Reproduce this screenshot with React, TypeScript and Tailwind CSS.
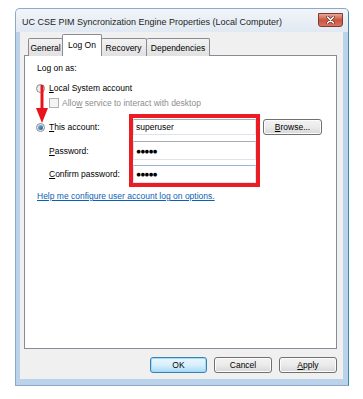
import React from 'react';

function Radio({ checked }: { checked?: boolean }) {
  return (
    <div className="w-[9px] h-[9px] shrink-0 rounded-full border border-[#8a8a8a] bg-gradient-to-br from-[#e6e6e6] to-[#fbfbfb] flex items-center justify-center">
      {checked && <div className="w-[5px] h-[5px] rounded-full bg-gradient-to-br from-[#7fc4ee] to-[#16508c]" />}
    </div>
  );
}

function Btn({ children, focused, className }: { children: React.ReactNode; focused?: boolean; className?: string }) {
  return (
    <div
      className={
        'h-[16px] rounded-[3px] border flex items-center justify-center text-[8.5px] ' +
        (focused
          ? 'border-[#3c7fb1] bg-gradient-to-b from-[#eaf6fd] via-[#d9f0fc] to-[#a7d9f5] shadow-[inset_0_0_0_1px_#9edcf7]'
          : 'border-[#707070] bg-gradient-to-b from-[#f2f2f2] via-[#ebebeb] to-[#d6d6d6] shadow-[inset_0_0_0_1px_#fcfcfc]') +
        ' ' +
        (className ?? '')
      }
    >
      {children}
    </div>
  );
}

function Field({ value, h, top }: { value: string; h: string; top?: string }) {
  return (
    <div className={`${h} border border-[#e2e3ea] ${top ?? 'border-t-[#abadb3]'} bg-white flex items-center pl-[2px] text-[8.5px]`}>
      {value}
    </div>
  );
}

export default function App() {
  return (
    <div className="w-[363px] h-[399px] bg-white pt-[8px] pl-[15px] font-['Liberation_Sans',Arial,sans-serif] text-[8.5px] text-black leading-[12px]">
      <div className="w-[334px] h-[378px] flex flex-col rounded-t-[5px] border border-[#8da9c7] border-r-[#3a86ad] bg-[#bad2ea]">
        {/* title bar */}
        <div className="h-[23px] shrink-0 flex items-center justify-between pl-[6px] pr-[5px] bg-gradient-to-b from-[#f2f5f9] to-[#e1e9f2] rounded-t-[4px]">
          <span className="text-[9px] text-[#1e1e1e] pt-[2px]">UC CSE PIM Syncronization Engine Properties (Local Computer)</span>
          <div className="w-[25px] h-[14px] -mt-[2px] rounded-b-[3px] border border-[#7d3a30] bg-gradient-to-b from-[#e8a89b] via-[#c9543e] to-[#d8735f] flex items-center justify-center">
            <svg width="9" height="8" viewBox="0 0 9 8">
              <path d="M1.5 1 L7.5 7 M7.5 1 L1.5 7" stroke="#5b2a22" strokeWidth="2.8" strokeLinecap="round" />
              <path d="M1.5 1 L7.5 7 M7.5 1 L1.5 7" stroke="#ffffff" strokeWidth="1.6" strokeLinecap="round" />
            </svg>
          </div>
        </div>
        {/* body */}
        <div className="flex-1 flex pl-[4px] pr-[5px] pb-[6px]">
          <div className="flex-1 flex flex-col bg-[#f0f0f0] pl-[4px] pr-[6px] pt-[2px]">
            {/* tabs */}
            <div className="h-[22px] flex items-end pl-[4px] -mb-[1px] relative z-10">
              <div className="h-[18px] w-[35px] border border-[#898c95] border-b-0 rounded-t-[2px] bg-gradient-to-b from-[#f2f2f2] to-[#e1e1e1] flex items-center justify-center text-[8.5px]">
                General
              </div>
              <div className="h-[22px] w-[40px] -mx-[1px] border border-[#898c95] border-b-0 rounded-t-[2px] bg-white flex items-start justify-center pt-[4px] text-[8.5px] relative">
                Log On
              </div>
              <div className="h-[18px] w-[46px] border border-[#898c95] border-b-0 border-l-0 rounded-t-[2px] bg-gradient-to-b from-[#f2f2f2] to-[#e1e1e1] flex items-center justify-center text-[8.5px]">
                Recovery
              </div>
              <div className="h-[18px] w-[63px] border border-[#898c95] border-b-0 border-l-0 rounded-t-[2px] bg-gradient-to-b from-[#f2f2f2] to-[#e1e1e1] flex items-center justify-center text-[8.5px]">
                Dependencies
              </div>
            </div>
            {/* panel */}
            <div className="h-[294px] border border-[#898c95] bg-white relative pl-[11px] pt-[6px]">
              <div className="pl-[1px]">Log on as:</div>
              <div className="mt-[8px] h-[12px] flex items-center gap-[4px]">
                <Radio />
                <span>
                  <span className="underline">L</span>ocal System account
                </span>
              </div>
              <div className="mt-[3px] h-[12px] flex items-center gap-[3px] pl-[13px] text-[#8d8d8d]">
                <div className="w-[10px] h-[10px] border border-[#b1b1b1] bg-[#f4f4f4]" />
                <span>
                  Allo<span className="underline">w</span> service to interact with desktop
                </span>
              </div>
              {/* account block */}
              <div className="mt-[5px] flex">
                <div className="w-[93px] flex flex-col pt-[5px]">
                  <div className="h-[16px] flex items-center gap-[4px]">
                    <Radio checked />
                    <span>
                      <span className="underline">T</span>his account:
                    </span>
                  </div>
                  <div className="h-[19px] mt-[6px] flex items-center pl-[13px]">
                    <span>
                      <span className="underline">P</span>assword:
                    </span>
                  </div>
                  <div className="h-[18px] mt-[5px] flex items-center pl-[13px]">
                    <span>
                      <span className="underline">C</span>onfirm password:
                    </span>
                  </div>
                </div>
                <div className="w-[131px] border-[4px] border-[#ec1c24] bg-white pt-[1px] flex flex-col">
                  <Field value="superuser" h="h-[16px]" />
                  <Field value="●●●●●" h="h-[19px] mt-[6px] tracking-[-1px] text-[7px]" />
                  <Field value="●●●●●" h="h-[18px] mt-[5px] tracking-[-1px] text-[7px]" top="border-t-[#9db5d4]" />
                </div>
                <div className="pl-[3px] pt-[5px]">
                  <Btn className="w-[59px] h-[15px]">
                    <span>
                      <span className="underline">B</span>rowse...
                    </span>
                  </Btn>
                </div>
              </div>
              <div className="mt-[3px] pl-[1px] text-[#0d5fb3] underline">Help me configure user account log on options.</div>
              {/* red arrow annotation */}
              <svg className="absolute left-[11px] top-[29px]" width="12" height="38" viewBox="0 0 12 38">
                <line x1="6" y1="0" x2="6" y2="24" stroke="#e8141b" strokeWidth="3" />
                <polygon points="0,23 12,23 6,38" fill="#e8141b" />
              </svg>
            </div>
            {/* buttons */}
            <div className="mt-[8px] flex justify-end gap-[7px]">
              <Btn focused className="w-[57px]">
                OK
              </Btn>
              <Btn className="w-[58px]">Cancel</Btn>
              <Btn className="w-[58px]">
                <span>
                  <span className="underline">A</span>pply
                </span>
              </Btn>
            </div>
          </div>
        </div>
      </div>
    </div>
  );
}
